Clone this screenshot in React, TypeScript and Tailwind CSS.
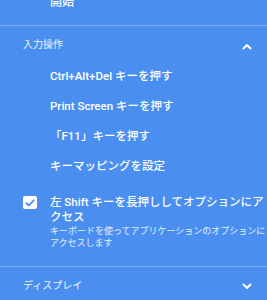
import React from "react";

const font = { fontFamily: 'Roboto, "Noto Sans CJK JP", sans-serif' };

function Chevron({ up }: { up?: boolean }) {
  return (
    <svg width="10" height="7" viewBox="0 0 10 7" className="block">
      <path
        d={up ? "M1.5 5.5 L5 2 L8.5 5.5" : "M1.5 1.5 L5 5 L8.5 1.5"}
        fill="none"
        stroke="white"
        strokeWidth="2"
        strokeLinecap="round"
        strokeLinejoin="round"
      />
    </svg>
  );
}

function Item({ children }: { children: React.ReactNode }) {
  return (
    <div className="h-[30px] flex items-center pl-[50px] text-[11.5px] font-medium text-white whitespace-nowrap">
      {children}
    </div>
  );
}

export default function App() {
  return (
    <div
      className="w-[267px] h-[300px] overflow-hidden bg-[#4a8ff0] text-white"
      style={font}
    >
      <div className="h-[25px] pl-[50px] flex flex-col">
        <div className="-mt-[4px] leading-[12px] text-[12px] font-medium">開始</div>
      </div>
      <div className="h-px bg-white/25" />
      <div className="h-[36px] flex items-center justify-between pl-[23px] pr-[15px]">
        <span className="text-[10px] text-white/90">入力操作</span>
        <span className="mt-[4px]">
          <Chevron up />
        </span>
      </div>
      <Item>Ctrl+Alt+Del キーを押す</Item>
      <Item>Print Screen キーを押す</Item>
      <Item>「F11」キーを押す</Item>
      <Item>キーマッピングを設定</Item>
      <div className="h-[84px] flex pl-[23px] pt-[13px]">
        <div className="w-[14px] h-[13px] mt-[1px] rounded-[2px] bg-white flex items-center justify-center shrink-0">
          <svg width="10" height="8" viewBox="0 0 10 8">
            <path
              d="M1.3 4.2 L3.8 6.5 L8.8 1.3"
              fill="none"
              stroke="#4a8ff0"
              strokeWidth="1.8"
              strokeLinecap="round"
              strokeLinejoin="round"
            />
          </svg>
        </div>
        <div className="ml-[13px] whitespace-nowrap">
          <div className="text-[11.5px] leading-[15px] font-medium">
            左 Shift キーを長押ししてオプションにア
            <br />
            クセス
          </div>
          <div className="text-[9px] leading-[12px] text-white/85">
            キーボードを使ってアプリケーションのオプションに
            <br />
            アクセスします
          </div>
        </div>
      </div>
      <div className="h-px bg-white/25" />
      <div className="h-[36px] flex items-center justify-between pl-[23px] pr-[15px]">
        <span className="text-[10px] text-white/90">ディスプレイ</span>
        <span className="mt-[2px]">
          <Chevron />
        </span>
      </div>
    </div>
  );
}
